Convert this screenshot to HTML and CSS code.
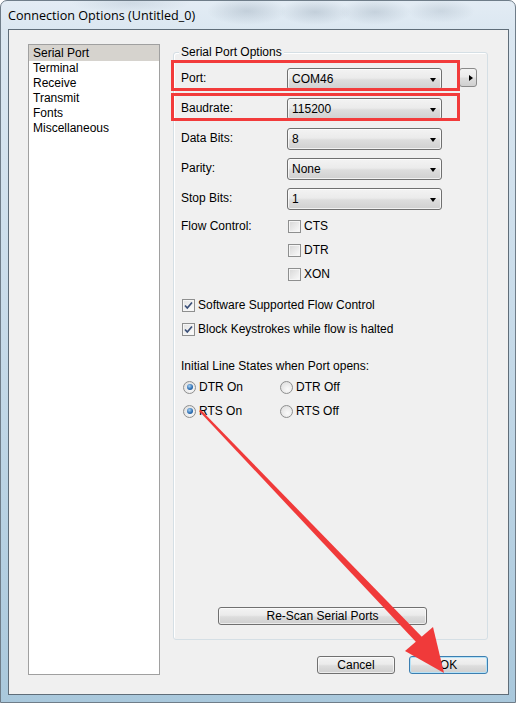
FILE: index.html
```html
<!DOCTYPE html>
<html>
<head>
<meta charset="utf-8">
<link rel="stylesheet" href="styles.css">
</head>
<body>
<div class="window">
  <div class="titlebar">Connection Options (Untitled_0)</div>
  <div class="client">
    <div class="listbox">
      <div class="item selected">Serial Port</div>
      <div class="item">Terminal</div>
      <div class="item">Receive</div>
      <div class="item">Transmit</div>
      <div class="item">Fonts</div>
      <div class="item">Miscellaneous</div>
    </div>
    <div class="rightcol">
      <div class="group">
        <div class="legend">Serial Port Options</div>
        <div class="rows">
          <div class="row">
            <span class="lbl">Port:</span>
            <div class="combo"><span>COM46</span><i class="down"></i></div>
            <div class="arrowbtn"><i class="right"></i></div>
          </div>
          <div class="row">
            <span class="lbl">Baudrate:</span>
            <div class="combo"><span>115200</span><i class="down"></i></div>
          </div>
          <div class="row">
            <span class="lbl">Data Bits:</span>
            <div class="combo"><span>8</span><i class="down"></i></div>
          </div>
          <div class="row">
            <span class="lbl">Parity:</span>
            <div class="combo"><span>None</span><i class="down"></i></div>
          </div>
          <div class="row last">
            <span class="lbl">Stop Bits:</span>
            <div class="combo"><span>1</span><i class="down"></i></div>
          </div>
        </div>
        <div class="flow">
          <span class="lbl flowlbl">Flow Control:</span>
          <div class="checks">
            <label class="chk"><span class="box"></span>CTS</label>
            <label class="chk"><span class="box"></span>DTR</label>
            <label class="chk"><span class="box"></span>XON</label>
          </div>
        </div>
        <div class="opts">
          <label class="chk wide"><span class="box checked"><svg width="11" height="11" viewBox="0 0 11 11"><path d="M2 5.5 L4.3 8 L9 2.5" fill="none" stroke="#3a4f78" stroke-width="1.7"/></svg></span>Software Supported Flow Control</label>
          <label class="chk wide"><span class="box checked"><svg width="11" height="11" viewBox="0 0 11 11"><path d="M2 5.5 L4.3 8 L9 2.5" fill="none" stroke="#3a4f78" stroke-width="1.7"/></svg></span>Block Keystrokes while flow is halted</label>
        </div>
        <div class="initlbl">Initial Line States when Port opens:</div>
        <div class="radios">
          <label class="rad"><span class="circle on"></span>DTR On</label>
          <label class="rad"><span class="circle"></span>DTR Off</label>
          <label class="rad"><span class="circle on"></span>RTS On</label>
          <label class="rad"><span class="circle"></span>RTS Off</label>
        </div>
        <div class="spacer"></div>
        <div class="btn rescan">Re-Scan Serial Ports</div>
      </div>
      <div class="buttons">
        <div class="btn cancel">Cancel</div>
        <div class="btn ok">OK</div>
      </div>
    </div>
  </div>
  <div class="mark mark1"></div>
  <div class="mark mark2"></div>
  <svg class="annot" width="516" height="703" viewBox="0 0 516 703">
    <polygon points="199,411 201,410 423,638 417,643" fill="#f03a3a"/>
    <polygon points="405,651 433,627 444,673" fill="#f03a3a"/>
  </svg>
</div>
</body>
</html>
```
FILE: styles.css
```css
* { box-sizing: border-box; }
body {
  margin: 0;
  font-family: "Liberation Sans", Arial, sans-serif;
  font-size: 12px;
  color: #000;
  background: #fff;
}
.window {
  position: relative;
  width: 516px;
  height: 703px;
  display: flex;
  flex-direction: column;
  border: 1px solid #6f7d89;
  border-radius: 7px 7px 0 0;
  padding: 0 6px 7px 7px;
  background:
    radial-gradient(ellipse 40px 14px at 246px 10px, rgba(90,110,130,.22), transparent),
    radial-gradient(ellipse 36px 13px at 314px 11px, rgba(90,110,130,.22), transparent),
    radial-gradient(ellipse 36px 13px at 374px 11px, rgba(90,110,130,.2), transparent),
    radial-gradient(ellipse 34px 12px at 440px 10px, rgba(90,110,130,.16), transparent),
    radial-gradient(ellipse 60px 10px at 130px 2px, rgba(120,140,160,.18), transparent),
    linear-gradient(#e3ecf4 0px, #dbe7f1 30px, #c9dcea 300px, #a9c8dc 703px);
}
.titlebar {
  height: 28px;
  padding-left: 0;
  padding-top: 6px;
  font-family: "Open Sans", "Noto Sans", sans-serif;
  font-size: 12.6px;
  line-height: 17px;
  color: #000;
}
.client {
  flex: 1;
  display: flex;
  border: 1px solid #5f6d79;
  background: #f0f0f0;
  padding: 14px 0 0 19px;
}
.listbox {
  width: 132px;
  height: 631px;
  border: 1px solid #a0a0a0;
  background: #fff;
}
.item {
  height: 15px;
  line-height: 17px;
  padding-left: 4px;
}
.item.selected { background: #d6d3ce; height: 16px; margin-bottom: -1px; }
.rightcol {
  margin-left: 13px;
  padding-top: 8px;
  display: flex;
  flex-direction: column;
}
.group {
  width: 315px;
  height: 588px;
  border: 1px solid #d5dfe5;
  border-radius: 3px;
  box-shadow: inset 1px 1px 0 #fff;
  padding: 0 0 0 7px;
  display: flex;
  flex-direction: column;
}
.legend {
  align-self: flex-start;
  margin-top: -8px;
  margin-left: -2px;
  padding: 0 2px;
  height: 14px;
  line-height: 15px;
  background: #f0f0f0;
}
.rows { margin-top: 9px; }
.row {
  display: flex;
  align-items: flex-start;
  height: 22px;
  margin-bottom: 8px;
}
.row.last { margin-bottom: 4px; }
.lbl {
  width: 106px;
  flex: none;
  line-height: 21px;
}
.combo {
  width: 155px;
  height: 22px;
  border: 1px solid #707070;
  border-radius: 3px;
  background: linear-gradient(#f3f3f3 0%, #ebebeb 45%, #dddddd 55%, #d0d0d0 100%);
  box-shadow: inset 0 0 0 1px rgba(255,255,255,.7);
  display: flex;
  align-items: center;
  justify-content: space-between;
  padding: 0 5px 0 4px;
}
.combo span { line-height: 21px; }
.down {
  width: 0;
  height: 0;
  border-left: 3.5px solid transparent;
  border-right: 3.5px solid transparent;
  border-top: 4px solid #000;
  margin-top: 2px;
}
.arrowbtn {
  width: 18px;
  height: 19px;
  margin-left: 17px;
  border: 1px solid #8a8a8a;
  border-radius: 3px;
  background: linear-gradient(#f3f3f3 0%, #ebebeb 45%, #dddddd 55%, #d0d0d0 100%);
  display: flex;
  align-items: center;
  justify-content: flex-end;
  padding-right: 3px;
}
.right {
  width: 0;
  height: 0;
  border-top: 3.5px solid transparent;
  border-bottom: 3.5px solid transparent;
  border-left: 4px solid #000;
}
.flow { display: flex; }
.flowlbl { line-height: 24px; height: 24px; }
.checks { display: flex; flex-direction: column; }
.chk {
  display: flex;
  align-items: center;
  height: 24px;
}
.box {
  width: 13px;
  height: 13px;
  flex: none;
  margin-left: 1px;
  margin-right: 3px;
  border: 1px solid #8e8f8f;
  background: linear-gradient(135deg, #d6d6d6, #fbfbfb);
  box-shadow: inset 0 0 0 1px #f5f5f5;
  display: flex;
  align-items: center;
  justify-content: center;
}
.box.checked { background: linear-gradient(135deg, #e2e2e2, #fdfdfd); }
.box svg { display: block; }
.opts { margin-top: 7px; }
.initlbl {
  margin-top: 16px;
  height: 18px;
  line-height: 19px;
}
.radios {
  display: grid;
  grid-template-columns: 97px auto;
  margin-left: 2px;
}
.rad {
  display: flex;
  align-items: center;
  height: 24px;
}
.circle {
  width: 13px;
  height: 13px;
  flex: none;
  margin-right: 3px;
  border-radius: 50%;
  border: 1px solid #8e8f8f;
  background: radial-gradient(circle at 60% 65%, #fafafa, #dadada);
  display: flex;
  align-items: center;
  justify-content: center;
}
.circle.on::after {
  content: "";
  width: 6px;
  height: 6px;
  border-radius: 50%;
  background: radial-gradient(circle at 40% 35%, #a9d3f5, #2a6bb0 60%, #1b4b86);
}
.spacer { flex: 1; }
.btn {
  height: 18px;
  border: 1px solid #707070;
  border-radius: 3px;
  background: linear-gradient(#f3f3f3 0%, #ebebeb 45%, #dddddd 55%, #cfcfcf 100%);
  box-shadow: inset 0 0 0 1px rgba(255,255,255,.6);
  text-align: center;
  line-height: 17px;
}
.rescan {
  width: 209px;
  margin-left: 37px;
  margin-bottom: 14px;
}
.buttons {
  margin-top: 16px;
  display: flex;
  justify-content: flex-end;
  gap: 14px;
  width: 315px;
}
.cancel { width: 78px; }
.ok {
  width: 79px;
  border-color: #3c7fb1;
  box-shadow: inset 0 0 0 1px #b6e2f7;
}
.mark {
  position: absolute;
  border: 3px solid #f23b3b;
}
.mark1 { left: 170px; top: 59px; width: 289px; height: 31px; }
.mark2 { left: 170px; top: 92px; width: 289px; height: 28px; }
.annot {
  position: absolute;
  left: -1px;
  top: -1px;
}
```
